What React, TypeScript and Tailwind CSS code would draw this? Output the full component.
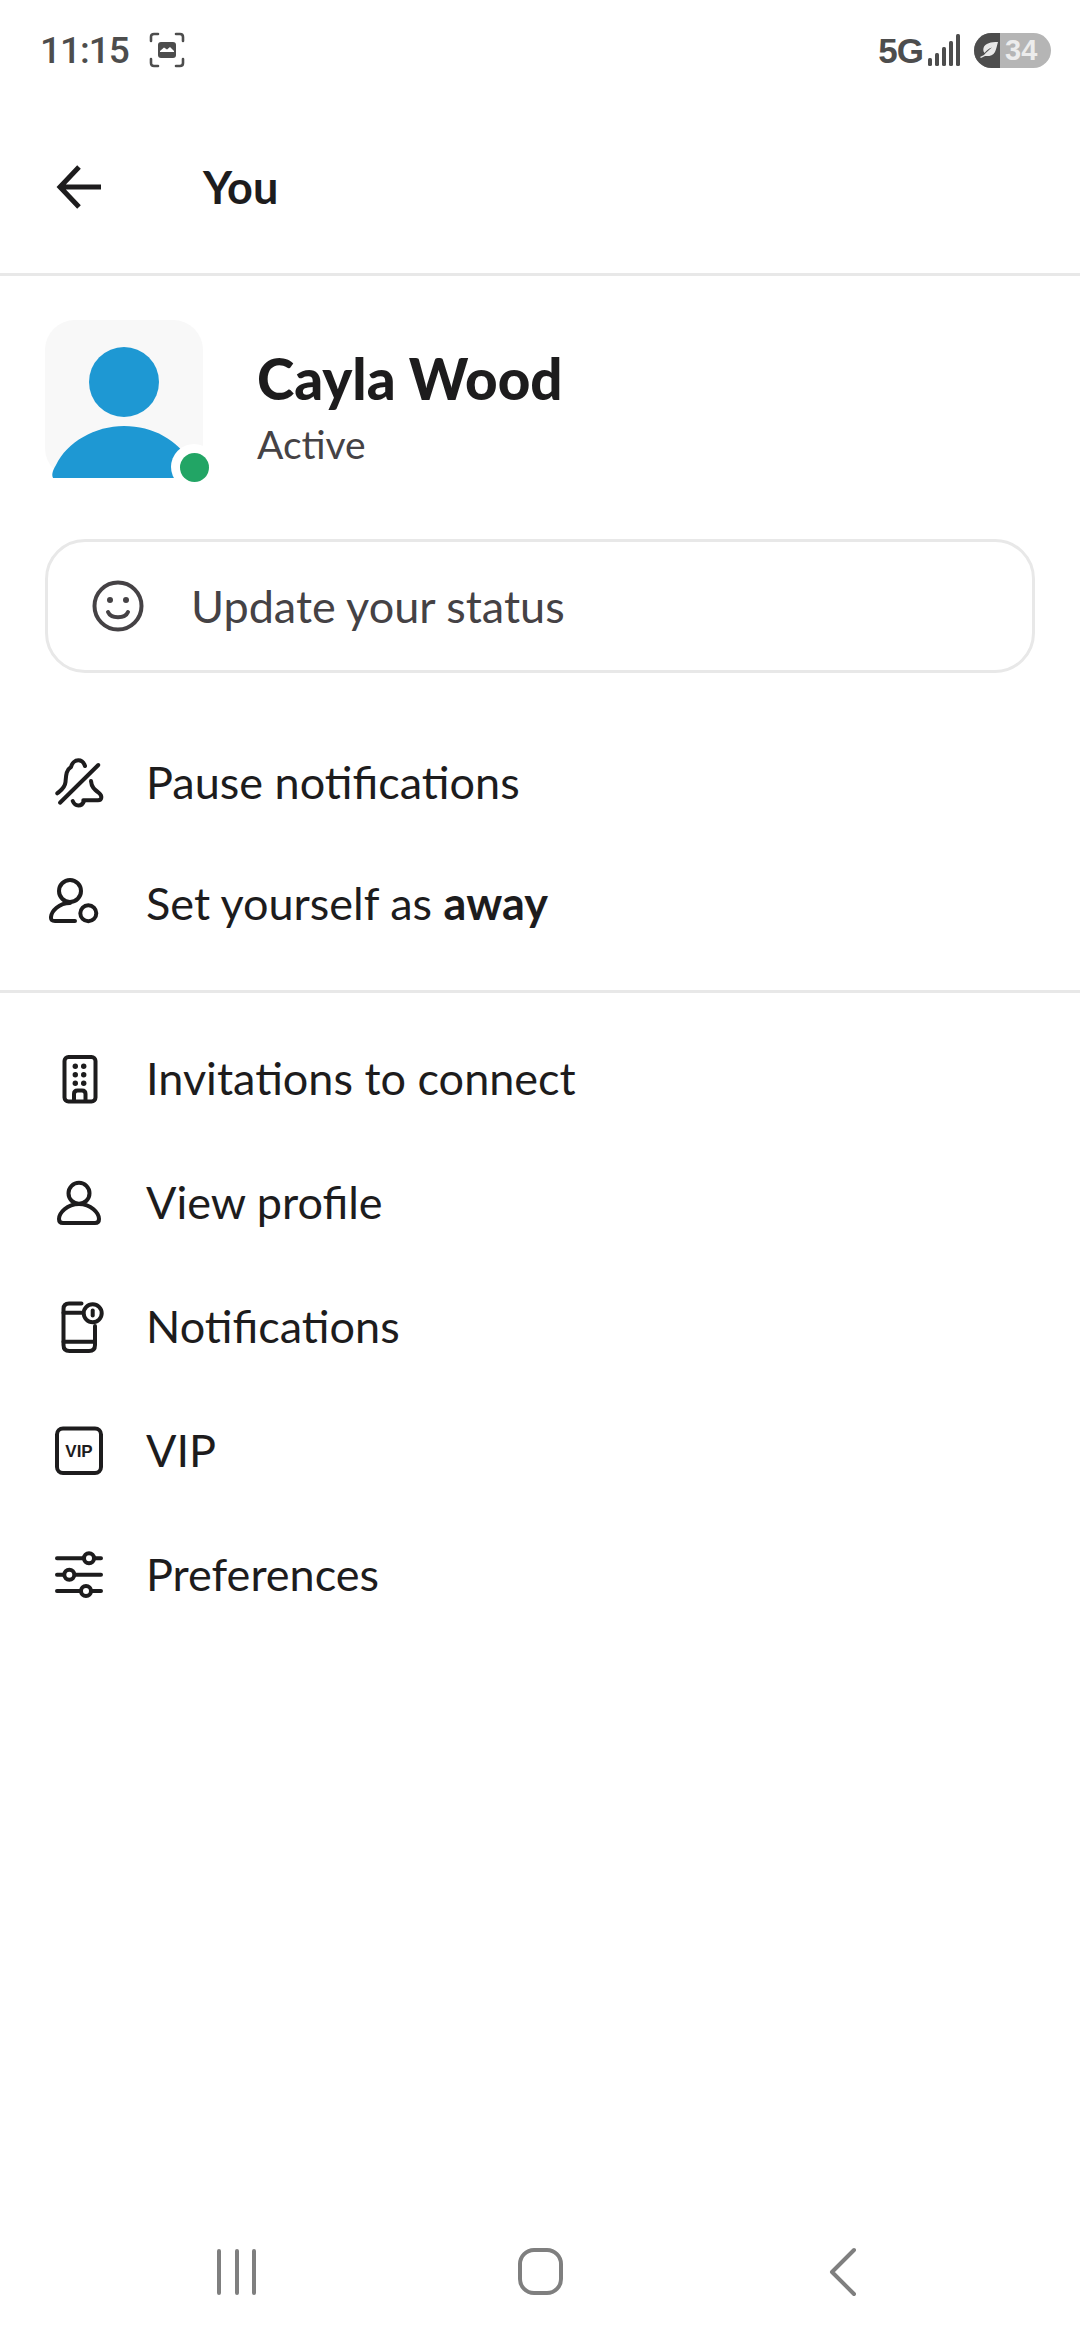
const ink = "#1d1c1d";

function Glyph({ children }: { children: React.ReactNode }) {
  return (
    <svg width="60" height="60" viewBox="0 0 60 60" fill="none" stroke={ink} strokeWidth="4" strokeLinecap="round" strokeLinejoin="round">
      {children}
    </svg>
  );
}

const BellOff = () => (
  <Glyph>
    <path d="M11 48.7 49.3 11" />
    <path d="M8.3 39.3 C12 36 16 34 16.5 28 C17 22 17 16 22 13 C23 9 26 6.3 29.3 6.3 C32.5 6.3 35 9 36 12" />
    <path d="M42 27 C42.5 33 45 35 50 39 C53.5 42 53 46.3 49 46.3 H34.3" />
    <path d="M23.7 47 C25 50 27 51.5 29.3 51.5 C31.8 51.5 34 50 35 47" />
  </Glyph>
);

const PersonAway = () => (
  <Glyph>
    <circle cx="21" cy="16" r="11" />
    <path d="M21 28 C10 28 2.5 36 2 42 C1.8 45 3 46 6 46 H26" />
    <circle cx="39.3" cy="38.3" r="8" />
  </Glyph>
);

const Building = () => (
  <Glyph>
    <rect x="15.5" y="7" width="31" height="44.5" rx="4" />
    <path d="M25 51 V44 Q25 40.5 28.5 40.5 H33 Q36.5 40.5 36.5 44 V51" />
    <g fill={ink} stroke="none">
      <circle cx="26.3" cy="16.3" r="2.7" />
      <circle cx="34.7" cy="16.3" r="2.7" />
      <circle cx="26.3" cy="24.7" r="2.7" />
      <circle cx="34.7" cy="24.7" r="2.7" />
      <circle cx="26.3" cy="33.3" r="2.7" />
      <circle cx="34.7" cy="33.3" r="2.7" />
    </g>
  </Glyph>
);

const Person = () => (
  <Glyph>
    <circle cx="30" cy="19.3" r="10.5" />
    <path d="M30 30 C18 30 10 39 10 45 Q10 49 14 49 H46 Q50 49 50 45 C50 39 42 30 30 30 Z" />
  </Glyph>
);

const PhoneAlert = () => (
  <Glyph>
    <path d="M32.5 5.5 H20 Q14.5 5.5 14.5 11 V47 Q14.5 53 20.5 53 H40 Q46 53 46 47 V28" />
    <path d="M14.5 14.7 H32.5" />
    <path d="M14.5 43.7 H46" />
    <circle cx="43.7" cy="15.3" r="9" />
    <path d="M43.7 12.5 V17.5" />
  </Glyph>
);

const Vip = () => (
  <Glyph>
    <rect x="8" y="6.5" width="44" height="44.5" rx="6" />
    <text x="30" y="34.8" textAnchor="middle" fill={ink} stroke="none" fontSize="17" fontWeight="700" fontFamily="'Liberation Sans', sans-serif">
      VIP
    </text>
  </Glyph>
);

const Sliders = () => (
  <Glyph>
    <path d="M8 12.3 H52 M8 28.7 H52 M8 45 H52" />
    <g fill="#fff">
      <circle cx="40" cy="12.3" r="5" />
      <circle cx="20.3" cy="28.7" r="5" />
      <circle cx="37" cy="45" r="5" />
    </g>
  </Glyph>
);

function Row({ icon, children }: { icon: React.ReactNode; children: React.ReactNode }) {
  return (
    <div className="flex h-[124px] items-center pl-[49px]">
      {icon}
      <span className="ml-[37px] pb-[2px] text-[45px] text-[#1d1c1d]">{children}</span>
    </div>
  );
}

function StatusBar() {
  return (
    <div className="flex h-[100px] items-center justify-between pl-[40px] pr-[29px] text-[#4d4d4d]">
      <div className="flex items-center">
        <span className="font-['Roboto',sans-serif] text-[37px] font-medium leading-none tracking-[-1px]">11:15</span>
        <svg className="ml-[20px]" width="36" height="36" viewBox="0 0 36 36" fill="none" stroke="#4d4d4d" strokeWidth="2.6" strokeLinecap="round">
          <path d="M2 9 V5 Q2 2 5 2 H9 M27 2 H31 Q34 2 34 5 V9 M34 27 V31 Q34 34 31 34 H27 M9 34 H5 Q2 34 2 31 V27" />
          <rect x="9" y="10" width="18" height="16" rx="3" fill="#4d4d4d" stroke="none" />
          <path d="M11 19 L15 15.5 L18 17.5 L21 15 L25 19 V20 H11 Z" fill="#fff" stroke="none" />
        </svg>
      </div>
      <div className="flex items-center">
        <span className="font-['Liberation_Sans',sans-serif] text-[35px] font-bold leading-none tracking-[-1px]">5G</span>
        <svg className="ml-[5px]" width="33" height="34" viewBox="0 0 33 34" fill="#4d4d4d">
          <rect x="0" y="25" width="4" height="8" rx="1.5" />
          <rect x="7" y="20" width="4" height="13" rx="1.5" />
          <rect x="14" y="14" width="4" height="19" rx="1.5" />
          <rect x="21" y="8" width="4" height="25" rx="1.5" />
          <rect x="28" y="1" width="4" height="32" rx="1.5" />
        </svg>
        <div className="ml-[13px] flex h-[35px] w-[77px] overflow-hidden rounded-full bg-[#b5b5b5]">
          <div className="flex w-[26px] items-center justify-end bg-[#4d4d4d] pr-[1px]">
            <svg width="20" height="18" viewBox="0 0 20 18" fill="#e8e8e8">
              <path d="M19 1 C12 1 6 2 4.5 7 C4 9 4.5 11 5.5 12 C8 9 10 7.5 13 6.5 C10.5 8.5 7.5 11 5 14 L1 16 L2 17 L6 15 C10 15.5 14 14.5 16 11 C17.5 8 18 4 19 1 Z" />
            </svg>
          </div>
          <span className="ml-[5px] font-['Liberation_Sans',sans-serif] text-[29px] font-bold leading-[35px] text-[#ececec]">34</span>
        </div>
      </div>
    </div>
  );
}

function Avatar() {
  return (
    <div className="relative h-[158px] w-[158px] shrink-0 overflow-visible rounded-[30px] bg-[#f8f8f8]">
      <svg width="158" height="158" viewBox="0 0 158 158" fill="#1e98d3">
        <ellipse cx="79" cy="62" rx="35" ry="35" />
        <path d="M9 159 C5 156 9 148 11 145 C22 122 50 106 79 106 C108 106 133 120 146 143 L144 159 Z" />
      </svg>
      <div className="absolute left-[126px] top-[124px] flex h-[46px] w-[46px] items-center justify-center rounded-full bg-white">
        <div className="h-[29px] w-[29px] rounded-full bg-[#22a565]" />
      </div>
    </div>
  );
}

export default function App() {
  return (
    <div className="flex h-[2340px] w-[1080px] flex-col bg-white font-['Lato',sans-serif]">
      <StatusBar />
      <header className="flex h-[176px] items-center border-b-[3px] border-[#e8e8e8] pl-[51px]">
        <svg width="60" height="60" viewBox="0 0 60 60" fill="none" stroke={ink} strokeWidth="5" strokeLinecap="miter">
          <path d="M50 30 H10 M28 10 L9 30 L28 50" />
        </svg>
        <h1 className="ml-[92px] pt-[2px] text-[45px] font-bold text-[#1d1c1d]">You</h1>
      </header>

      <section className="flex items-center px-[45px] pt-[44px]">
        <Avatar />
        <div className="ml-[54px] pt-[14px]">
          <div className="text-[56.5px] font-black leading-[72px] text-[#1d1c1d]">Cayla Wood</div>
          <div className="mt-[4px] text-[39px] leading-[52px] text-[#454245]">Active</div>
        </div>
      </section>

      <div className="mx-[45px] mt-[61px] flex h-[134px] items-center rounded-[40px] border-[3px] border-[#e8e8e8] pl-[40px]">
        <svg width="60" height="60" viewBox="0 0 60 60" fill="none" stroke="#454245" strokeWidth="4" strokeLinecap="round">
          <circle cx="30" cy="30" r="23.5" />
          <circle cx="22" cy="24" r="3" fill="#454245" stroke="none" />
          <circle cx="38" cy="24" r="3" fill="#454245" stroke="none" />
          <path d="M20 36 C23 43 37 43 40 36" />
        </svg>
        <span className="ml-[43px] pt-[2px] text-[45px] text-[#454245]">Update your status</span>
      </div>

      <div className="mt-[49px] border-b-[3px] border-[#e8e8e8] pb-[23px]">
        <Row icon={<BellOff />}>Pause notifications</Row>
        <div className="-mt-[3px]">
          <Row icon={<PersonAway />}>
            Set yourself as <b className="font-bold">away</b>
          </Row>
        </div>
      </div>

      <div className="pt-[25px]">
        <Row icon={<Building />}>Invitations to connect</Row>
        <Row icon={<Person />}>View profile</Row>
        <Row icon={<PhoneAlert />}>Notifications</Row>
        <Row icon={<Vip />}>VIP</Row>
        <Row icon={<Sliders />}>Preferences</Row>
      </div>

      <nav className="mt-auto flex justify-between px-[207px] pb-[43px]">
        <svg width="60" height="50" viewBox="0 0 60 50" fill="none" stroke="#7f7f7f" strokeWidth="4" strokeLinecap="round">
          <path d="M12 4 V46 M30 4 V46 M47 4 V46" />
        </svg>
        <svg width="60" height="50" viewBox="0 0 60 50" fill="none" stroke="#7f7f7f" strokeWidth="4">
          <rect x="10" y="3" width="41" height="43" rx="14" />
        </svg>
        <svg width="60" height="50" viewBox="0 0 60 50" fill="none" stroke="#7f7f7f" strokeWidth="4" strokeLinecap="round" strokeLinejoin="round">
          <path d="M41 3 L19 25 L41 47" />
        </svg>
      </nav>
    </div>
  );
}
